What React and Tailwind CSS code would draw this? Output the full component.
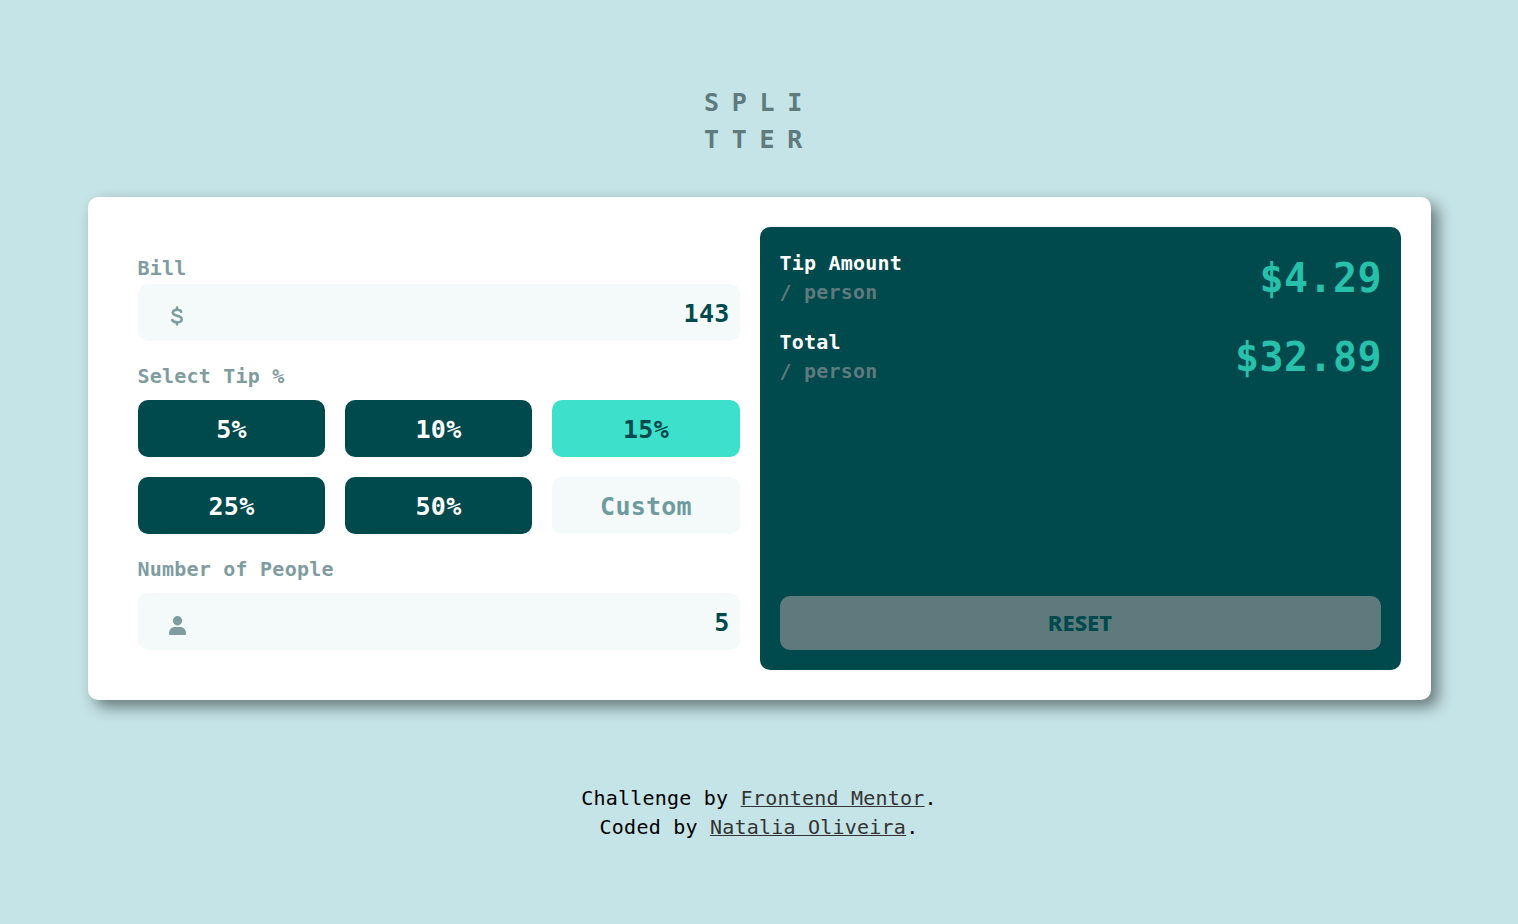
import { useState } from "react";

const labelClass = "flex h-[30px] items-center text-xl tracking-[0.22px] font-bold text-[#7f9c9f]";
const inputClass =
  "block h-[57px] w-full rounded-[10px] bg-[#f4fafa] pt-0.5 pr-2.5 pl-16 text-right text-[25px] tracking-[0.25px] font-bold text-[#00494d] outline-none";

const DollarIcon = () => (
  <svg width="12" height="20" viewBox="0 0 12 20" fill="none" stroke="#7f9c9f" strokeWidth="2.5" strokeLinecap="round">
    <path d="M6 1.500v2.200M6 16.300v2.200" />
    <path d="M10.200 5.800C9.700 4.400 8.300 3.800 6 3.800c-2.500 0-4.200 1-4.200 2.800C1.800 8.600 3.400 9.200 6 9.800c2.800.6 4.700 1.200 4.700 3.400 0 2-1.900 3.100-4.500 3.100-2.700 0-4.400-.8-4.900-2.300" />
  </svg>
);

const PersonIcon = () => (
  <svg width="17" height="19" viewBox="0 0 17 19" fill="#7f9c9f">
    <circle cx="8.5" cy="4.700" r="4.700" />
    <path d="M0 17.300C0 13.500 2.600 11 5.800 11h5.400c3.200 0 5.800 2.500 5.800 6.300V18a1 1 0 0 1-1 1H1a1 1 0 0 1-1-1z" />
  </svg>
);

function Field({ id, icon, value, onChange }) {
  return (
    <div className="relative">
      <span className="absolute top-[22px] left-[30px] flex h-5 w-[19px] items-center justify-center">{icon}</span>
      <input id={id} className={inputClass} value={value} onChange={(e) => onChange(e.target.value)} />
    </div>
  );
}

function Result({ title, value }) {
  return (
    <div className="flex h-[59px] items-center justify-between">
      <div className="pt-0.5 text-xl leading-[29px] font-bold tracking-[0.2px]">
        <p className="text-white">{title}</p>
        <p className="text-[#5e7a7d]">/ person</p>
      </div>
      <p className="-mr-[1.5px] pt-1 text-[40px] leading-[59px] font-bold tracking-[0.4px] text-[#26c0ab]">{value}</p>
    </div>
  );
}

export default function App() {
  const [bill, setBill] = useState("143");
  const [people, setPeople] = useState("5");
  const [tip, setTip] = useState(15);
  const amount = Number(bill) || 0;
  const count = Number(people) || 1;
  const tipEach = (amount * tip) / 100 / count;
  const totalEach = amount / count + tipEach;
  const reset = () => {
    setBill("");
    setPeople("");
    setTip(0);
  };

  return (
    <div className="flex h-[924px] flex-col items-center bg-[#c5e4e7] pt-[84px] font-['DejaVu_Sans_Mono',monospace]">
      <h1 className="w-[110px] text-[25px] leading-[37px] font-bold tracking-[12.7px] text-[#5e7a7d]">
        SPLI
        <br />
        TTER
      </h1>

      <main className="mt-[39px] flex h-[503px] w-[1343px] gap-5 rounded-[10px] bg-white py-[30px] pr-[30px] pl-[50px] shadow-[7px_7px_15px_rgba(0,0,0,0.48)]">
        <section className="w-[602px] pt-[26px]">
          <label htmlFor="bill" className={`${labelClass} mb-px`}>Bill</label>
          <Field id="bill" icon={<DollarIcon />} value={bill} onChange={setBill} />

          <p className={`${labelClass} mt-5 mb-[9px]`}>Select Tip %</p>
          <div className="grid grid-cols-[187px_187px_1fr] gap-5 text-[25px] tracking-[0.25px] font-bold">
            {[5, 10, 15, 25, 50].map((n) => (
              <button
                key={n}
                onClick={() => setTip(n)}
                className={`h-[57px] rounded-[10px] pt-0.5 pl-px ${n === tip ? "bg-[#3de0cb] text-[#00494d]" : "bg-[#00494d] text-white"}`}
              >
                {n}%
              </button>
            ))}
            <input
              placeholder="Custom"
              aria-label="Custom"
              className="h-[57px] w-full min-w-0 rounded-[10px] bg-[#f4fafa] pt-0.5 pl-px text-center text-[#00494d] outline-none placeholder:text-[#6f9a9e]"
            />
          </div>

          <label htmlFor="people" className={`${labelClass} mt-5 mb-[9px]`}>Number of People</label>
          <Field id="people" icon={<PersonIcon />} value={people} onChange={setPeople} />
        </section>

        <section className="flex flex-1 flex-col rounded-[10px] bg-[#00494d] p-5">
          <div className="flex flex-col gap-5">
            <Result title="Tip Amount" value={`$${tipEach.toFixed(2)}`} />
            <Result title="Total" value={`$${totalEach.toFixed(2)}`} />
          </div>
          <button
            onClick={reset}
            className="mt-auto h-[54px] rounded-[10px] bg-[#5e7a7d] pb-0.5 font-['Noto_Sans',sans-serif] text-[22px] font-extrabold text-[#00494d]"
          >
            RESET
          </button>
        </section>
      </main>

      <footer className="mt-[84px] text-center text-xl leading-[29px] tracking-[0.22px] text-black">
        <p>
          Challenge by <a href="#" className="text-[#333] underline decoration-1 underline-offset-1">Frontend Mentor</a>.
        </p>
        <p>
          Coded by <a href="#" className="text-[#333] underline decoration-1 underline-offset-1">Natalia Oliveira</a>.
        </p>
      </footer>
    </div>
  );
}
